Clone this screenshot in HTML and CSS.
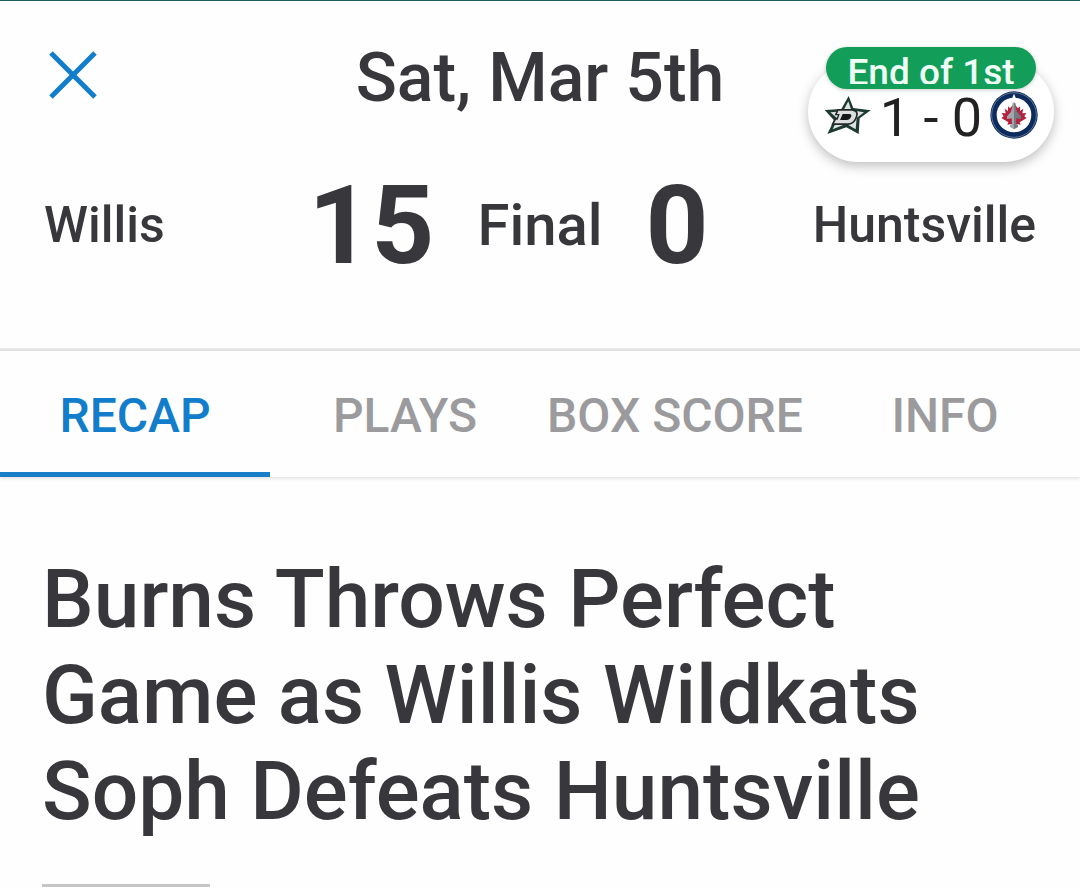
FILE: index.html
```html
<!DOCTYPE html>
<html lang="en">
<head>
    <meta charset="UTF-8">
    <meta name="viewport" content="width=device-width, initial-scale=1.0">
    <title>Willis vs Huntsville</title>
    <link rel="stylesheet" href="styles.css">
</head>
<body>
    <header class="game-header">
        <div class="top-bar">
            <button class="close" type="button" aria-label="Close">
                <svg width="48" height="48" viewBox="0 0 48 48">
                    <path d="M2 2L46 46M46 2L2 46" stroke="#117dcb" stroke-width="5"/>
                </svg>
            </button>
            <h2 class="date">Sat, Mar 5th</h2>
        </div>
        <div class="score">
            <div class="side">
                <span class="team">Willis</span>
                <span class="runs">15</span>
            </div>
            <span class="status">Final</span>
            <div class="side">
                <span class="runs">0</span>
                <span class="team">Huntsville</span>
            </div>
        </div>
    </header>

    <!-- Floating live score -->
    <div class="live">
        <div class="live-badge"><span class="live-period">End of 1st</span></div>
        <div class="live-score">
            <svg class="live-logo" width="48" height="48" viewBox="30 18 144 144">
                <path d="M104 33L118 69L170 76L137 100L134 147L97 127L40 147L60 106L32 75L82 72Z" fill="#1c3a31"/>
                <path d="M103 49L112 76L150 82L128 99L125 133L97 116L56 133L71 101L49 82L87 79Z" fill="#dfe2e2"/>
                <path d="M70 72H116Q137 75 130 96Q121 120 101 120H52L62 100H67L72 91H62Z" fill="#222a28"/>
                <path d="M73 77H114Q131 79 125 95Q118 115 100 115H60L66 104H71L77 87H69Z" fill="#dcdede"/>
                <path d="M86 87H106Q115 88 111 96Q107 105 98 105H78Z" fill="#15181a"/>
            </svg>
            <span>1 - 0</span>
            <svg class="live-logo" width="48" height="48" viewBox="0 0 144 144">
                <circle cx="72" cy="72" r="71" fill="#0b2c5c"/>
                <circle cx="72" cy="72" r="67" fill="none" stroke="#8e9cad" stroke-width="2"/>
                <circle cx="72" cy="72" r="52" fill="#fff"/>
                <path d="M72 38L60 52L54 46L54 60L44 53L47 67L35 66L41 76L34 81L55 94L52 101L72 98L92 101L89 94L110 81L103 76L109 66L97 67L100 53L90 60L90 46L84 52Z" fill="#b5213d"/>
                <path d="M72 14L67 29V48L63 62L51 76V84L65 82L66 98L60 103V108L72 115Z" fill="#a2a5aa"/>
                <path d="M72 14L77 29V48L81 62L93 76V84L79 82L78 98L84 103V108L72 115Z" fill="#747a82"/>
                <path d="M72 8L64 27V40L72 34L80 40V27Z" fill="#fff"/>
            </svg>
        </div>
    </div>

    <nav class="tabs">
        <a class="tab active" href="#recap">RECAP</a>
        <a class="tab" href="#plays">PLAYS</a>
        <a class="tab" href="#box-score">BOX SCORE</a>
        <a class="tab" href="#info">INFO</a>
    </nav>

    <main class="recap" id="recap">
        <h1 class="headline">Burns Throws Perfect Game as Willis Wildkats Soph Defeats Huntsville</h1>
        <hr class="divider">
    </main>
</body>
</html>
```

FILE: styles.css
```css
* {
    box-sizing: border-box;
}
body {
    margin: 0;
    background-color: #fefefe;
    color: #38373c;
    font-family: Roboto, sans-serif;
    font-weight: 500;
}
.game-header {
    padding: 35px 44px 58px;
    border-top: 1px solid #1d5e63;
    border-bottom: 3px solid #e9e9e9;
}
.top-bar {
    display: grid;
    grid-template-columns: 1fr auto 1fr;
    height: 84px;
}
.close {
    display: flex;
    align-self: start;
    justify-self: start;
    padding: 15px 5px;
    border: none;
    background: none;
    cursor: pointer;
}
.date {
    margin: 0;
    font-size: 68px;
    line-height: 84px;
    font-weight: 500;
}
.score {
    display: grid;
    grid-template-columns: 1fr auto 1fr;
    align-items: center;
    column-gap: 43px;
    height: 130px;
    margin-top: 40px;
}
.side {
    display: flex;
    align-items: center;
    justify-content: space-between;
}
.team {
    font-size: 50px;
}
.runs {
    font-size: 110px;
    font-weight: 700;
}
.status {
    font-size: 58px;
}
.live {
    position: absolute;
    top: 47px;
    right: 26px;
    width: 246px;
    display: flex;
    flex-direction: column;
    align-items: center;
}
.live::before {
    content: "";
    position: absolute;
    inset: 14px 0 0;
    border-radius: 51px;
    background-color: #fff;
    box-shadow: 0 4px 12px rgba(0, 0, 0, 0.25);
}
.live-badge {
    position: relative;
    height: 42px;
    padding: 6px 21px;
    border-radius: 21px;
    background-color: #129e58;
    color: #effff6;
    box-shadow: 0 1px 4px rgba(0, 0, 0, 0.2);
}
.live-period {
    display: block;
    height: 31px;
    overflow: hidden;
    font-size: 37px;
    line-height: 40px;
}
.live-score {
    position: relative;
    display: flex;
    align-items: flex-start;
    gap: 8px;
    height: 73px;
    padding-top: 2px;
    color: #222;
    font-size: 54px;
    line-height: 54px;
    font-weight: 400;
    white-space: nowrap;
}
.live-logo {
    flex: none;
}
.tabs {
    display: grid;
    grid-template-columns: repeat(4, 1fr);
    box-shadow: 0 1px 4px rgba(0, 0, 0, 0.15);
}
.tab {
    padding: 33px 0 25px;
    border-bottom: 5px solid transparent;
    color: #9b9b9e;
    font-size: 48px;
    line-height: 63px;
    text-align: center;
    text-decoration: none;
    white-space: nowrap;
}
.tab.active {
    border-bottom-color: #187ec8;
    color: #117dcb;
}
.recap {
    padding: 74px 42px 0;
}
.headline {
    margin: 0;
    font-size: 82px;
    line-height: 96px;
    font-weight: 500;
}
.divider {
    width: 168px;
    height: 3px;
    margin: 45px 0 0;
    border: none;
    background-color: #c5c5c5;
}
```
